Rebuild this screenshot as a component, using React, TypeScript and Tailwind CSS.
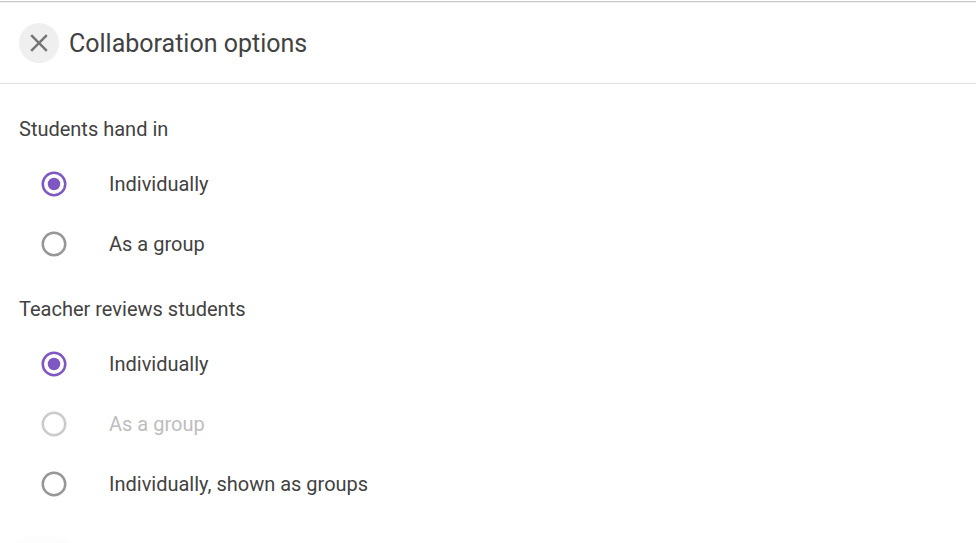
type Option = {
  label: string;
  checked?: boolean;
  disabled?: boolean;
};

const handIn: Option[] = [
  { label: "Individually", checked: true },
  { label: "As a group" },
];

const reviews: Option[] = [
  { label: "Individually", checked: true },
  { label: "As a group", disabled: true },
  { label: "Individually, shown as groups" },
];

const Radio = ({ checked, disabled }: Omit<Option, "label">) => {
  const color = checked
    ? "text-[#7e57c2]"
    : disabled
      ? "text-[#cbcbcb]"
      : "text-[#979797]";
  return (
    <svg viewBox="0 0 26 26" className={`size-[26px] shrink-0 ${color}`}>
      <circle
        cx="13"
        cy="13"
        r="11.25"
        fill="none"
        stroke="currentColor"
        strokeWidth="2.5"
      />
      {checked && <circle cx="13" cy="13" r="6.25" fill="currentColor" />}
    </svg>
  );
};

const OptionGroup = ({
  title,
  options,
}: {
  title: string;
  options: Option[];
}) => (
  <section>
    <h2 className="flex h-[50px] items-center pl-[19px] text-[20px]">
      {title}
    </h2>
    <ul>
      {options.map((item) => (
        <li key={item.label} className="flex h-[60px] items-center pl-[41px]">
          <Radio checked={item.checked} disabled={item.disabled} />
          <span
            className={`ml-[42px] text-[20px] ${item.disabled ? "text-[#bdbdbd]" : ""}`}
          >
            {item.label}
          </span>
        </li>
      ))}
    </ul>
  </section>
);

const App = () => {
  return (
    <div className="h-[543px] overflow-hidden bg-white pt-px font-[Roboto,sans-serif] text-[#424242]">
      <header className="flex h-[83px] items-center border-t border-b border-t-[#c8c8c8] border-b-[#e0e0e0] pt-px pl-[19px] shadow-[inset_0_1px_0_#f0f0f0]">
        <button
          aria-label="Close"
          className="flex size-10 items-center justify-center rounded-full bg-[#efefef]"
        >
          <svg
            viewBox="0 0 18 18"
            className="size-[18px] fill-none stroke-[#757575] stroke-[2.5]"
          >
            <path d="M1.2 1.2 L16.8 16.8 M16.8 1.2 L1.2 16.8" />
          </svg>
        </button>
        <h1 className="ml-2.5 pt-0.5 text-[25px]">Collaboration options</h1>
      </header>
      <main className="pt-5">
        <OptionGroup title="Students hand in" options={handIn} />
        <div className="h-2.5" />
        <OptionGroup title="Teacher reviews students" options={reviews} />
      </main>
      {/* top edge of the floating button's shadow */}
      <div className="mt-[22px] ml-[13px] h-[7px] w-[58px] rounded-t-[50%_100%] bg-[#fdfdfd]" />
    </div>
  );
};

export default App;
